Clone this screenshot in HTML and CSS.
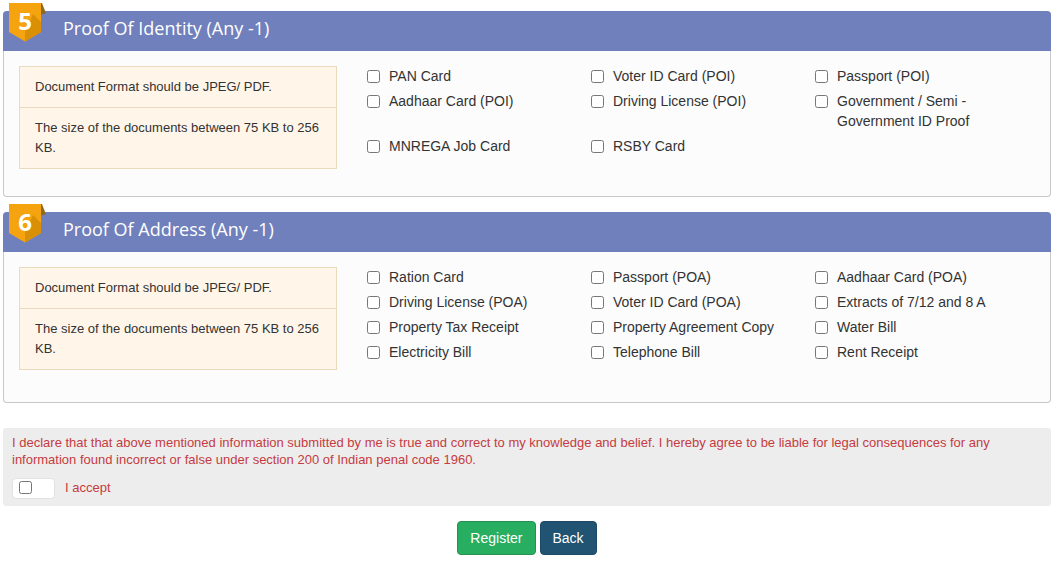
FILE: index.html
```
<!DOCTYPE html>
<html lang="en">
<head>
<meta charset="utf-8">
<title>Registration</title>
<link rel="stylesheet" href="styles.css">
</head>
<body>
<form class="page">
  <section class="card">
    <header class="card-header">
      <span class="badge">
        <svg class="badge-shape" viewBox="0 0 37 39" aria-hidden="true">
          <path d="M31 0H33L37 10.500L32 11.500Z" fill="#8f6a1c"/>
          <path d="M0 0H32V29L16 38.500L0 29Z" fill="#f5a30f"/>
          <path d="M16 29L24 11L32 19V29L16 38.500Z" fill="#d98f06"/>
        </svg>
        <span class="badge-number">5</span>
      </span>
      <h2 class="card-title">Proof Of Identity (Any -1)</h2>
    </header>
    <div class="card-body">
      <ul class="notes">
        <li class="note">Document Format should be JPEG/ PDF.</li>
        <li class="note">The size of the documents between 75 KB to 256 KB.</li>
      </ul>
      <div class="options">
        <label class="option"><input class="check" type="checkbox">PAN Card</label>
        <label class="option"><input class="check" type="checkbox">Voter ID Card (POI)</label>
        <label class="option"><input class="check" type="checkbox">Passport (POI)</label>
        <label class="option"><input class="check" type="checkbox">Aadhaar Card (POI)</label>
        <label class="option"><input class="check" type="checkbox">Driving License (POI)</label>
        <label class="option"><input class="check" type="checkbox">Government / Semi - Government ID Proof</label>
        <label class="option"><input class="check" type="checkbox">MNREGA Job Card</label>
        <label class="option"><input class="check" type="checkbox">RSBY Card</label>
      </div>
    </div>
  </section>

  <section class="card">
    <header class="card-header">
      <span class="badge">
        <svg class="badge-shape" viewBox="0 0 37 39" aria-hidden="true">
          <path d="M31 0H33L37 10.500L32 11.500Z" fill="#8f6a1c"/>
          <path d="M0 0H32V29L16 38.500L0 29Z" fill="#f5a30f"/>
          <path d="M16 29L24 11L32 19V29L16 38.500Z" fill="#d98f06"/>
        </svg>
        <span class="badge-number">6</span>
      </span>
      <h2 class="card-title">Proof Of Address (Any -1)</h2>
    </header>
    <div class="card-body">
      <ul class="notes">
        <li class="note">Document Format should be JPEG/ PDF.</li>
        <li class="note">The size of the documents between 75 KB to 256 KB.</li>
      </ul>
      <div class="options">
        <label class="option"><input class="check" type="checkbox">Ration Card</label>
        <label class="option"><input class="check" type="checkbox">Passport (POA)</label>
        <label class="option"><input class="check" type="checkbox">Aadhaar Card (POA)</label>
        <label class="option"><input class="check" type="checkbox">Driving License (POA)</label>
        <label class="option"><input class="check" type="checkbox">Voter ID Card (POA)</label>
        <label class="option"><input class="check" type="checkbox">Extracts of 7/12 and 8 A</label>
        <label class="option"><input class="check" type="checkbox">Property Tax Receipt</label>
        <label class="option"><input class="check" type="checkbox">Property Agreement Copy</label>
        <label class="option"><input class="check" type="checkbox">Water Bill</label>
        <label class="option"><input class="check" type="checkbox">Electricity Bill</label>
        <label class="option"><input class="check" type="checkbox">Telephone Bill</label>
        <label class="option"><input class="check" type="checkbox">Rent Receipt</label>
      </div>
    </div>
  </section>

  <section class="declaration">
    <p class="declaration-text">I declare that that above mentioned information submitted by me is true and correct to my knowledge and belief. I hereby agree to be liable for legal consequences for any information found incorrect or false under section 200 of Indian penal code 1960.</p>
    <label class="accept"><span class="accept-box"><input class="check" type="checkbox"></span>I accept</label>
  </section>

  <div class="actions">
    <button class="button button-primary" type="button">Register</button>
    <button class="button button-secondary" type="button">Back</button>
  </div>
</form>
</body>
</html>
```
FILE: styles.css
```
* {
  box-sizing: border-box;
}

body {
  margin: 0;
  background: #fff;
  color: #333;
  font: 14px/20px "Liberation Sans", Arial, sans-serif;
}

.page {
  padding: 11px 3px 0;
}

.card {
  margin-bottom: 15px;
  border: 1px solid #c8c8cc;
  border-top: 0;
  border-radius: 4px;
  background: #fcfcfc;
}

.card-header {
  position: relative;
  display: flex;
  align-items: center;
  height: 40px;
  margin: 0 -1px;
  padding: 0 60px 6px;
  border-radius: 4px 4px 0 0;
  background: #7080bc;
  color: #fff;
}

.card-title {
  margin: 0;
  font: 400 18px/24px "Open Sans", sans-serif;
}

.badge {
  position: absolute;
  top: -8px;
  left: 6px;
  width: 37px;
  height: 39px;
}

.badge-shape {
  display: block;
  width: 100%;
  height: 100%;
}

.badge-number {
  position: absolute;
  top: 4px;
  left: 0;
  width: 32px;
  font: 700 24px/28px "Open Sans", sans-serif;
  text-align: center;
}

.card-body {
  display: grid;
  grid-template-columns: minmax(0, 318fr) minmax(0, 672fr);
  align-items: start;
  gap: 30px;
  padding: 15px 11px 0 15px;
}

.notes {
  margin: 0;
  padding: 0;
  border: 1px solid #eadbbd;
  background: #fff6e9;
  font-size: 13px;
  list-style: none;
}

.note {
  padding: 10px 15px;
}

.note + .note {
  border-top: 1px solid #eadbbd;
}

.options {
  display: grid;
  grid-template-columns: repeat(3, minmax(0, 1fr));
  gap: 5px 0;
  padding-bottom: 40px;
}

.option {
  display: flex;
  align-items: flex-start;
  gap: 9px;
}

.check {
  flex: none;
  width: 13px;
  height: 13px;
  margin: 4px 0 0;
}

.declaration {
  margin-top: 25px;
  padding: 6px 9px 7px;
  border-radius: 3px;
  background: #ededed;
  color: #c43c41;
  font-size: 13px;
}

.declaration-text {
  margin: 0 0 10px;
  line-height: 17px;
}

.accept {
  display: inline-flex;
  align-items: flex-start;
  gap: 10px;
  line-height: 19px;
  vertical-align: top;
}

.accept-box {
  display: flex;
  width: 43px;
  height: 21px;
  padding-left: 6px;
  border: 1px solid #e2e2e2;
  border-radius: 4px;
  background: #fff;
}

.accept .check {
  margin-top: 2px;
}

.actions {
  display: flex;
  justify-content: center;
  gap: 4px;
  padding: 15px 0 6px;
}

.button {
  padding: 6px 12px;
  border: 1px solid;
  border-radius: 4px;
  color: #fff;
  font: inherit;
}

.button-primary {
  border-color: #249150;
  background: #28ae60;
}

.button-secondary {
  border-color: #1c4a66;
  background: #205472;
}
```
